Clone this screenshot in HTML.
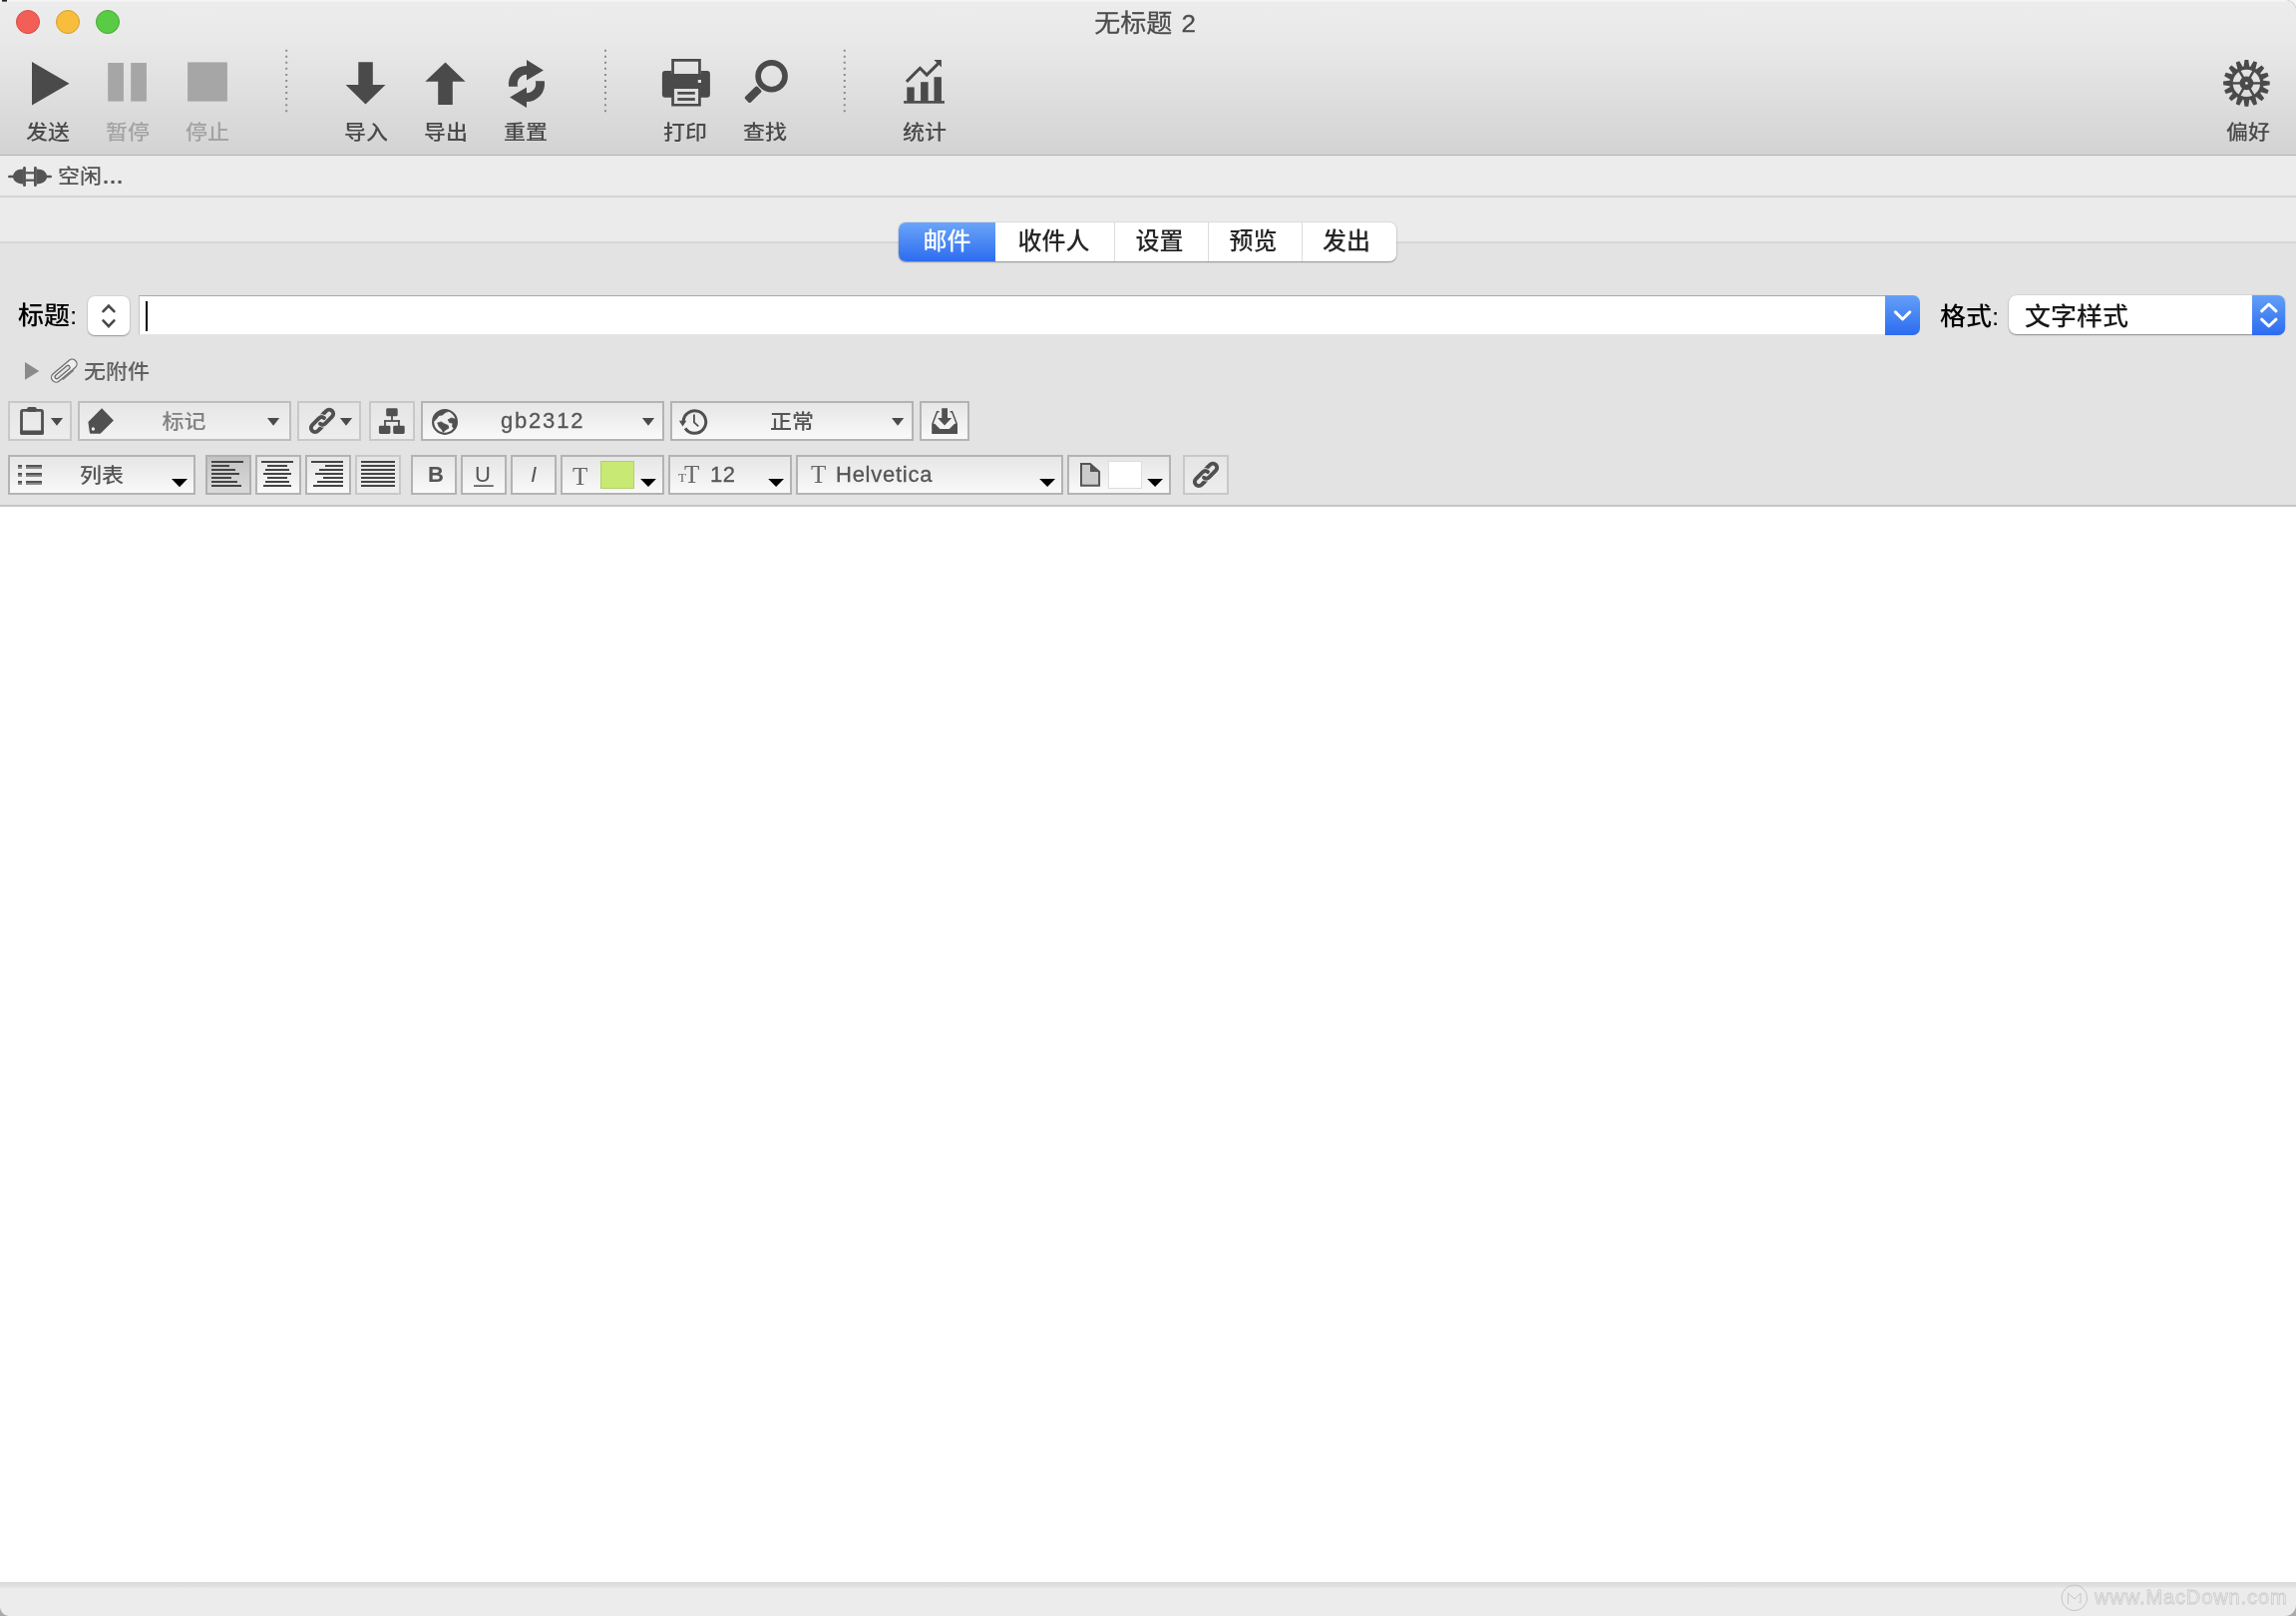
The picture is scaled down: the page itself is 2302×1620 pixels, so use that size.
<!DOCTYPE html>
<html lang="zh-CN">
<head>
<meta charset="utf-8">
<title>无标题 2</title>
<style>
html,body{margin:0;padding:0;}
body{width:2302px;height:1620px;position:relative;overflow:hidden;background:#fff;
  font-family:"Liberation Sans","Noto Sans CJK SC",sans-serif;color:#4a4a4a;font-weight:500;}
#root{position:absolute;left:0;top:0;width:2302px;height:1620px;will-change:transform;}
.abs{position:absolute;}
#titlebar{left:0;top:0;width:2302px;height:155px;background:linear-gradient(#f6f6f6 0px,#f4f4f4 1px,#ececec 2.5px,#e9e9e9 40px,#d3d3d3 155px);}
#tbline{left:0;top:155px;width:2302px;height:1px;background:#b3b3b3;}
#status{left:0;top:156px;width:2302px;height:40px;background:#ececec;}
#line1{left:0;top:196px;width:2302px;height:2px;background:#d5d5d5;z-index:1;}
#tabarea{left:0;top:197px;width:2302px;height:46px;background:#ebebeb;}
#line2{left:0;top:241.5px;width:2302px;height:2px;background:#d6d6d6;z-index:1;}
#box{left:0;top:242px;width:2302px;height:265px;background:#e3e3e3;}
#line3{left:0;top:505.5px;width:2302px;height:2px;background:#c6c6c6;z-index:1;}
#bottom{left:0;top:1586px;width:2302px;height:34px;background:linear-gradient(#dadada 0px,#e2e2e2 5px,#ececec 6px,#ececec 34px);}
.tl{position:absolute;top:10px;width:24px;height:24px;border-radius:50%;box-sizing:border-box;}
#title{left:-3px;width:2302px;top:6px;text-align:center;word-spacing:2px;font-weight:400;-webkit-text-stroke:0.3px #4c4c4c;font-size:26px;line-height:34px;color:#4c4c4c;}
.lbl{position:absolute;top:119px;font-size:22px;line-height:28px;white-space:nowrap;transform:translateX(-50%) scaleY(0.94);transform-origin:50% 86%;color:#4a4a4a;}
.cj{transform:scaleY(0.94);transform-origin:50% 86%;}
.lbl.dis{color:#a3a3a3;}
.t{position:absolute;white-space:nowrap;line-height:1;}
/* segmented */
#seg{z-index:2;left:901px;top:223px;width:499px;height:39px;border-radius:7px;background:#fff;box-shadow:0 1px 1.5px rgba(0,0,0,.32),0 0 0 1px rgba(0,0,0,.06);overflow:hidden;}
#seg div{position:absolute;top:0;height:39px;font-size:24px;line-height:37px;text-align:center;color:#262626;}
#seg .sel{background:linear-gradient(#6aa5f8,#2d6cf0);color:#fff;}
#seg .dv{width:1px;background:#dcdcdc;}
/* bezel buttons */
.bz{position:absolute;box-sizing:border-box;border:2px solid #b3b3b3;background:linear-gradient(#e6e6e6,#f9f9f9);}
.bz.lt{border-color:#c8c8c8;background:linear-gradient(#e5e5e5,#ededed);}
.bz.on{border-color:#b0b0b0;background:linear-gradient(#c3c3c3,#dadada);}
.r1{top:402px;height:40px;}
.r2{top:456px;height:40px;}
</style>
</head>
<body>
<div id="root">
<div id="titlebar" class="abs"></div>
<div id="tbline" class="abs"></div>
<div id="status" class="abs"></div>
<div id="line1" class="abs"></div>
<div id="tabarea" class="abs"></div>
<div id="line2" class="abs"></div>
<div id="box" class="abs"></div>
<div id="line3" class="abs"></div>
<div id="bottom" class="abs"></div>

<!-- traffic lights -->
<div class="tl" style="left:16px;background:#f35f57;border:1px solid #d34c43;"></div>
<div class="tl" style="left:56px;background:#f9bd3e;border:1px solid #d29f30;"></div>
<div class="tl" style="left:96px;background:#5acb45;border:1px solid #45a934;"></div>
<div id="title" class="abs cj">无标题 2</div>

<!-- toolbar labels -->
<div class="lbl" style="left:48px">发送</div>
<div class="lbl dis" style="left:128px">暂停</div>
<div class="lbl dis" style="left:208px">停止</div>
<div class="lbl" style="left:367px">导入</div>
<div class="lbl" style="left:447px">导出</div>
<div class="lbl" style="left:527px">重置</div>
<div class="lbl" style="left:687px">打印</div>
<div class="lbl" style="left:767px">查找</div>
<div class="lbl" style="left:927px">统计</div>
<div class="lbl" style="left:2254px">偏好</div>

<!-- status -->
<div class="t cj" style="left:58px;top:164px;font-size:22px;line-height:26px;color:#555;">空闲<span style="font-weight:bold;letter-spacing:0.9px;margin-left:1px;">...</span></div>

<!-- segmented control -->
<div id="seg" class="abs">
  <div class="sel" style="left:0;width:97px;">邮件</div>
  <div style="left:96px;width:119px;">收件人</div>
  <div class="dv" style="left:216px;"></div>
  <div style="left:215px;width:93px;">设置</div>
  <div class="dv" style="left:310px;"></div>
  <div style="left:309px;width:93px;">预览</div>
  <div class="dv" style="left:404px;"></div>
  <div style="left:402px;width:94px;">发出</div>
</div>

<!-- title row -->
<div class="t cj" style="left:18px;top:300px;font-size:26px;line-height:32px;color:#000;">标题:</div>
<div class="abs" style="left:88px;top:297px;width:42px;height:39px;border-radius:7px;background:#fff;box-shadow:0 1px 1.5px rgba(0,0,0,.3),0 0 0 1px rgba(0,0,0,.05);"></div>
<div class="abs" style="left:139px;top:296px;width:1752px;height:40px;box-sizing:border-box;background:#fff;border:1px solid #c4c4c4;border-top-color:#a9a9a9;border-bottom-color:#e6e6e6;border-right:none;"></div>
<div class="abs" style="left:146px;top:302px;width:2px;height:30px;background:#000;"></div>
<div class="abs" style="left:1890px;top:296px;width:35px;height:40px;border-radius:0 7px 7px 0;background:linear-gradient(#63a0f8,#2c6bf0);"></div>
<div class="t cj" style="left:1945px;top:301px;font-size:26px;line-height:32px;color:#000;">格式:</div>
<div class="abs" style="left:2014px;top:296px;width:277px;height:39px;border-radius:8px;background:#fff;box-shadow:0 1px 1.5px rgba(0,0,0,.35),0 0 0 1px rgba(0,0,0,.05);"></div>
<div class="abs" style="left:2258px;top:296px;width:33px;height:40px;border-radius:0 7px 7px 0;background:linear-gradient(#63a0f8,#2c6bf0);"></div>
<div class="t cj" style="left:2030px;top:301px;font-size:26px;line-height:32px;color:#1a1a1a;">文字样式</div>

<!-- attachments -->
<div class="t cj" style="left:84px;top:359px;font-size:22px;line-height:28px;color:#606060;">无附件</div>

<!-- row 1 buttons -->
<div class="bz lt r1" style="left:8px;width:64px;"></div>
<div class="bz r1" style="left:78px;width:214px;border-color:#bebebe;background:linear-gradient(#e6e6e6,#f2f2f2);"></div>
<div class="bz lt r1" style="left:298px;width:64px;"></div>
<div class="bz lt r1" style="left:370px;width:46px;"></div>
<div class="bz r1" style="left:422px;width:244px;"></div>
<div class="bz r1" style="left:672px;width:244px;"></div>
<div class="bz r1" style="left:922px;width:50px;"></div>
<div class="t cj" style="left:162.5px;top:409px;font-size:22px;line-height:28px;color:#808080;">标记</div>
<div class="t" style="left:502px;top:408px;font-size:22px;line-height:28px;color:#555;letter-spacing:1.8px;-webkit-text-stroke:0.3px #555;">gb2312</div>
<div class="t cj" style="left:772px;top:409px;font-size:22px;line-height:28px;color:#555;">正常</div>

<!-- row 2 buttons -->
<div class="bz r2" style="left:8px;width:188px;"></div>
<div class="bz on r2" style="left:206px;width:46px;"></div>
<div class="bz r2" style="left:256px;width:46px;"></div>
<div class="bz r2" style="left:306px;width:46px;"></div>
<div class="bz lt r2" style="left:356px;width:46px;"></div>
<div class="bz r2" style="left:412px;width:46px;"></div>
<div class="bz r2" style="left:462px;width:46px;"></div>
<div class="bz r2" style="left:512px;width:46px;"></div>
<div class="bz r2" style="left:562px;width:104px;"></div>
<div class="bz r2" style="left:670px;width:124px;"></div>
<div class="bz r2" style="left:798px;width:268px;"></div>
<div class="bz r2" style="left:1070px;width:104px;"></div>
<div class="bz lt r2" style="left:1186px;width:46px;"></div>
<div class="t cj" style="left:80px;top:463px;font-size:22px;line-height:28px;color:#555;">列表</div>
<div class="t" style="left:429px;top:462px;font-size:22px;line-height:28px;font-weight:bold;color:#555;">B</div>
<div class="t" style="left:476px;top:462px;font-size:22px;line-height:28px;color:#555;">U</div>
<div class="t" style="left:532px;top:462px;font-size:22px;line-height:28px;font-style:italic;color:#555;">I</div>
<div class="t" style="left:574px;top:462px;font-size:25px;line-height:32px;font-family:'Liberation Serif',serif;color:#666;">T</div>
<div class="t" style="left:680px;top:469px;font-size:13px;line-height:20px;font-family:'Liberation Serif',serif;color:#666;">T</div>
<div class="t" style="left:686px;top:460px;font-size:25px;line-height:32px;font-family:'Liberation Serif',serif;color:#666;">T</div>
<div class="t" style="left:712px;top:462px;font-size:22px;line-height:28px;color:#555;letter-spacing:0.4px;-webkit-text-stroke:0.3px #555;">12</div>
<div class="t" style="left:813px;top:460px;font-size:25px;line-height:32px;font-family:'Liberation Serif',serif;color:#666;">T</div>
<div class="t" style="left:838px;top:462px;font-size:22px;line-height:28px;color:#555;letter-spacing:0.75px;-webkit-text-stroke:0.3px #555;">Helvetica</div>
<div class="abs" style="left:602px;top:462px;width:34px;height:28px;box-sizing:border-box;background:#c8ea74;border:1.5px solid #b3d068;"></div>
<div class="abs" style="left:1111px;top:462px;width:34px;height:28px;box-sizing:border-box;background:#fff;border:1.5px solid #dcdcdc;"></div>

<!-- watermark -->
<div class="t" style="left:2100px;top:1589px;font-size:20px;line-height:24px;font-weight:400;letter-spacing:0.9px;color:#efefef;-webkit-text-stroke:0.8px #cacaca;">www.MacDown.com</div>

<!-- ICONS -->
<svg class="abs" style="left:0;top:0" width="2302" height="1620" viewBox="0 0 2302 1620">
<g>
<path d="M32 62 L69.5 83.8 L32 105.6Z" fill="#4a4a4a"/>
<rect x="108.2" y="63" width="15.7" height="38.6" fill="#a6a6a6"/><rect x="131.2" y="63" width="15.7" height="38.6" fill="#a6a6a6"/>
<rect x="188.1" y="62.4" width="39.8" height="39.2" fill="#a6a6a6"/>
<line x1="287.2" y1="49.7" x2="287.2" y2="112.5" stroke="#8c8c8c" stroke-width="2" stroke-dasharray="2 4.05"/>
<line x1="607" y1="49.7" x2="607" y2="112.5" stroke="#8c8c8c" stroke-width="2" stroke-dasharray="2 4.05"/>
<line x1="846.8" y1="49.7" x2="846.8" y2="112.5" stroke="#8c8c8c" stroke-width="2" stroke-dasharray="2 4.05"/>
<path d="M359.3 62.2 H373.8 V85.1 H386.5 L366.5 104.4 L346.6 85.1 H359.3Z" fill="#4a4a4a"/>
<path d="M446.5 62.5 L466.6 81.8 H453.8 V105 H439.2 V81.8 H426.3Z" fill="#4a4a4a"/>
<path d="M510.10 86.70 A18.1 18.1 0 0 1 528.0 65.90 L528.0 59.9 L544.9 70.5 L528.0 80.4 L528.0 74.75 A9.25 9.25 0 0 0 519.15 86.70Z" fill="#4a4a4a"/>
<path d="M510.10 86.70 A18.1 18.1 0 0 1 528.0 65.90 L528.0 59.9 L544.9 70.5 L528.0 80.4 L528.0 74.75 A9.25 9.25 0 0 0 519.15 86.70Z" fill="#4a4a4a" transform="rotate(180 528.0 84.0)"/>
<path fill-rule="evenodd" fill="#4a4a4a" d="M673.2 59.1 H702.8 V74 H700.1 V61.8 H675.9 V74 H673.2Z"/>
<path fill-rule="evenodd" fill="#4a4a4a" d="M666.9 71 H673.2 V74 H702.8 V71 H708.9 A3 3 0 0 1 711.9 74 V94.7 A3 3 0 0 1 708.9 97.7 H702.8 V106.6 H673.2 V97.7 H666.9 A3 3 0 0 1 663.9 94.7 V74 A3 3 0 0 1 666.9 71Z M675.9 89 V104 H700.1 V89Z M699.8 80 H703 V83.1 H699.8Z"/>
<rect x="679.3" y="92" width="17.5" height="2.7" fill="#4a4a4a"/><rect x="679.3" y="98.1" width="17.5" height="2.8" fill="#4a4a4a"/>
<circle cx="773.6" cy="76.3" r="13.45" fill="none" stroke="#4a4a4a" stroke-width="5.7"/>
<rect x="-4" y="0" width="8" height="17.5" rx="1.8" fill="#4a4a4a" transform="translate(761.3 88.6) rotate(45.5)"/>
<rect x="906.1" y="101.1" width="40.8" height="2.6" fill="#4a4a4a"/>
<rect x="909.3" y="87.4" width="7.4" height="14" fill="#4a4a4a"/><rect x="923.1" y="82.2" width="7.5" height="19" fill="#4a4a4a"/><rect x="936.5" y="77.2" width="7.4" height="24" fill="#4a4a4a"/>
<path d="M908.9 81.9 L922.4 68.3 L929.2 75.1 L941 63.4" fill="none" stroke="#4a4a4a" stroke-width="3"/>
<path d="M936.3 60.1 H943.9 V67.6Z" fill="#4a4a4a"/>
<path d="M2249.40 67.90 L2250.50 60.10 L2254.30 60.10 L2255.40 67.90Z M2255.56 67.93 L2259.56 61.15 L2263.07 62.60 L2261.10 70.23Z M2261.24 70.32 L2267.53 65.58 L2270.22 68.27 L2265.48 74.56Z M2265.57 74.70 L2273.20 72.73 L2274.65 76.24 L2267.87 80.24Z M2267.90 80.40 L2275.70 81.50 L2275.70 85.30 L2267.90 86.40Z M2267.87 86.56 L2274.65 90.56 L2273.20 94.07 L2265.57 92.10Z M2265.48 92.24 L2270.22 98.53 L2267.53 101.22 L2261.24 96.48Z M2261.10 96.57 L2263.07 104.20 L2259.56 105.65 L2255.56 98.87Z M2255.40 98.90 L2254.30 106.70 L2250.50 106.70 L2249.40 98.90Z M2249.24 98.87 L2245.24 105.65 L2241.73 104.20 L2243.70 96.57Z M2243.56 96.48 L2237.27 101.22 L2234.58 98.53 L2239.32 92.24Z M2239.23 92.10 L2231.60 94.07 L2230.15 90.56 L2236.93 86.56Z M2236.90 86.40 L2229.10 85.30 L2229.10 81.50 L2236.90 80.40Z M2236.93 80.24 L2230.15 76.24 L2231.60 72.73 L2239.23 74.70Z M2239.32 74.56 L2234.58 68.27 L2237.27 65.58 L2243.56 70.32Z M2243.70 70.23 L2241.73 62.60 L2245.24 61.15 L2249.24 67.93Z" fill="#4a4a4a"/>
<circle cx="2252.4" cy="83.4" r="15.3" fill="none" stroke="#4a4a4a" stroke-width="3.2"/>
<line x1="2237.90" y1="83.40" x2="2266.90" y2="83.40" stroke="#4a4a4a" stroke-width="2.4"/>
<line x1="2245.15" y1="70.84" x2="2259.65" y2="95.96" stroke="#4a4a4a" stroke-width="2.4"/>
<line x1="2259.65" y1="70.84" x2="2245.15" y2="95.96" stroke="#4a4a4a" stroke-width="2.4"/>
<circle cx="2252.4" cy="83.4" r="6.9" fill="#4a4a4a"/><circle cx="2252.4" cy="83.4" r="1.4" fill="#e6e6e6"/>
<g fill="#555"><rect x="8" y="175.7" width="7" height="2.6" rx="1.3"/><path d="M23.5 169.6 C16 169.6 13.1 173.2 13.1 177 C13.1 180.8 16 184.4 23.5 184.4Z"/><rect x="23.1" y="167" width="2.8" height="20" rx="1.2"/><rect x="25.5" y="172.2" width="9" height="2.2"/><rect x="25.5" y="179.6" width="9" height="2.2"/><rect x="34" y="167" width="2.8" height="20" rx="1.2"/><path d="M36.6 169.6 C44 169.6 47 173.2 47 177 C47 180.8 44 184.4 36.6 184.4Z"/><rect x="45" y="175.7" width="7" height="2.6" rx="1.3"/></g>
<path d="M103.5 312.2 L108.9 306.6 L114.4 312.2 M103.5 321.4 L108.9 327.1 L114.4 321.4" fill="none" stroke="#484848" stroke-width="2.6" stroke-linecap="round" stroke-linejoin="miter"/>
<path d="M1900.4 312.9 L1907.6 320 L1914.8 312.9" fill="none" stroke="#fff" stroke-width="3" stroke-linecap="round" stroke-linejoin="round"/>
<path d="M2267.6 311.8 L2274.8 305 L2282 311.8 M2267.6 320.2 L2274.8 327 L2282 320.2" fill="none" stroke="#fff" stroke-width="3" stroke-linecap="round" stroke-linejoin="round"/>
<path d="M25 363.1 L39.3 372 L25 380.7Z" fill="#8a8a8a"/>
<g transform="translate(64.3 371.6) rotate(-40)" stroke="#6e6e6e" stroke-width="1.3" stroke-linecap="round"><rect x="-15.2" y="-4.7" width="30.4" height="9.4" rx="4.7" fill="#eeeeee"/><rect x="-11.5" y="-1.9" width="18.5" height="3.8" rx="1.9" fill="#e3e3e3"/><path d="M-6.4 5.9 L7 5.9" fill="none" stroke-width="1.1"/></g>
<rect x="21.5" y="411.4" width="21" height="23" rx="1.5" fill="none" stroke="#505050" stroke-width="2.8"/><rect x="20.1" y="431.6" width="23.8" height="4.2" rx="1.2" fill="#505050"/><rect x="27.2" y="407.9" width="9.4" height="5" rx="1.6" fill="#505050"/>
<path d="M50.9 419 h12.2 l-6.1 7.7Z" fill="#4a4a4a"/>
<path fill-rule="evenodd" fill="#505050" d="M102.1 409.3 L113.9 421.5 L100.6 434.7 H91.4 A1.6 1.6 0 0 1 89.8 433.2 L88.4 422.9Z M91.7 430 a1.7 1.7 0 1 0 3.4 0 a1.7 1.7 0 1 0 -3.4 0Z"/>
<path d="M268 419 h12.2 l-6.1 7.7Z" fill="#4a4a4a"/>
<g transform="translate(323.0 421.9) rotate(-45)"><path d="M7.2 -4.1 L10 -4.1 A4.1 4.1 0 0 1 10 4.1 L0.6 4.1 Q-3.2 4.1 -3.4 0.6" fill="none" stroke="#505050" stroke-width="3.9" stroke-linecap="round"/><path d="M3.3 -6.05 L7.6 -6.05 L7.6 -2.15 L7.2 -2.15Z" fill="#505050"/><!--#505050--><g transform="rotate(180)"><path d="M7.2 -4.1 L10 -4.1 A4.1 4.1 0 0 1 10 4.1 L0.6 4.1 Q-3.2 4.1 -3.4 0.6" fill="none" stroke="#505050" stroke-width="3.9" stroke-linecap="round"/><path d="M3.3 -6.05 L7.6 -6.05 L7.6 -2.15 L7.2 -2.15Z" fill="#505050"/><!--#505050--></g></g>
<path d="M340.9 419 h12.2 l-6.1 7.7Z" fill="#4a4a4a"/>
<g fill="#505050"><rect x="387.2" y="409.3" width="11.5" height="8" rx="1.4"/><rect x="379.9" y="426.7" width="11.5" height="8.2" rx="1.4"/><rect x="394.2" y="426.7" width="11.5" height="8.2" rx="1.4"/><rect x="392.1" y="417" width="1.8" height="5"/><rect x="385.1" y="421.1" width="15.7" height="1.8"/><rect x="385.1" y="421.1" width="1.8" height="6"/><rect x="399" y="421.1" width="1.8" height="6"/></g>
<circle cx="446" cy="422.9" r="11.9" fill="none" stroke="#505050" stroke-width="2.2"/>
<path fill="#505050" d="M434.9 418 L440.1 412.8 L446.4 410.7 L449.9 412.1 L446.1 413.8 L443.6 415.9 L440.1 416.6 L437.4 420.1 L435.3 422.2Z M438.7 423.9 L442.2 422.9 L445.7 425 L449.2 426.4 L449.9 429.1 L446.4 431.2 L444.3 433.4 L442.9 430.5 L440.1 427.8Z M449.2 420.8 L452.7 419 L457.2 420.4 L458.3 424.3 L455.5 429.8 L453.4 427.8 L454.1 424.3 L450.6 423.6Z" stroke="#505050" stroke-width="0.8" stroke-linejoin="round"/>
<path d="M643.9 419 h12.2 l-6.1 7.7Z" fill="#4a4a4a"/>
<path d="M685.11 422.61 A11.3 11.3 0 1 1 687.03 429.32" fill="none" stroke="#505050" stroke-width="3"/>
<path d="M680.9 421.8 H688.3 L684.5 427.4Z" fill="#505050"/>
<path d="M695.9 415.4 V423.3 L700.3 427.3" fill="none" stroke="#505050" stroke-width="1.8"/>
<path d="M894 419 h12.2 l-6.1 7.7Z" fill="#4a4a4a"/>
<path fill="#505050" d="M934.2 424.8 H937.2 L942.4 430 H951.8 L957 424.8 H960 V434.9 H934.2Z"/>
<path fill="none" stroke="#505050" stroke-width="1.5" d="M934.9 425 L939.6 412.8 H941.6 M959.3 425 L954.6 412.8 H952.6"/>
<path fill="#505050" d="M944.2 409.3 H950 V419 H954.1 L947.1 426.4 L940.1 419 H944.2Z"/>
<rect x="18" y="466" width="4" height="2" fill="#555"/><rect x="18" y="468" width="4" height="2" fill="#8a8a8a"/>
<rect x="26" y="466" width="16" height="2" fill="#555"/><rect x="26" y="468" width="16" height="2" fill="#8a8a8a"/>
<rect x="18" y="474" width="4" height="2" fill="#555"/><rect x="18" y="476" width="4" height="2" fill="#8a8a8a"/>
<rect x="26" y="474" width="16" height="2" fill="#555"/><rect x="26" y="476" width="16" height="2" fill="#8a8a8a"/>
<rect x="18" y="482" width="4" height="2" fill="#555"/><rect x="18" y="484" width="4" height="2" fill="#8a8a8a"/>
<rect x="26" y="482" width="16" height="2" fill="#555"/><rect x="26" y="484" width="16" height="2" fill="#8a8a8a"/>
<path d="M172 480 h16 l-8.0 8.2Z" fill="#000"/>
<rect x="212" y="462" width="32" height="2" fill="#444"/>
<rect x="212" y="466" width="18" height="2" fill="#444"/>
<rect x="212" y="470" width="24" height="2" fill="#444"/>
<rect x="212" y="474" width="28" height="2" fill="#444"/>
<rect x="212" y="478" width="20" height="2" fill="#444"/>
<rect x="212" y="482" width="26" height="2" fill="#444"/>
<rect x="212" y="486" width="30" height="2" fill="#444"/>
<rect x="262.0" y="462" width="32" height="2" fill="#444"/>
<rect x="268.0" y="466" width="20" height="2" fill="#444"/>
<rect x="266.0" y="470" width="24" height="2" fill="#444"/>
<rect x="264.0" y="474" width="28" height="2" fill="#444"/>
<rect x="268.0" y="478" width="20" height="2" fill="#444"/>
<rect x="266.0" y="482" width="24" height="2" fill="#444"/>
<rect x="264.0" y="486" width="28" height="2" fill="#444"/>
<rect x="312" y="462" width="32" height="2" fill="#444"/>
<rect x="326" y="466" width="18" height="2" fill="#444"/>
<rect x="320" y="470" width="24" height="2" fill="#444"/>
<rect x="316" y="474" width="28" height="2" fill="#444"/>
<rect x="324" y="478" width="20" height="2" fill="#444"/>
<rect x="318" y="482" width="26" height="2" fill="#444"/>
<rect x="314" y="486" width="30" height="2" fill="#444"/>
<rect x="362" y="462" width="34" height="2" fill="#444"/>
<rect x="362" y="466" width="34" height="2" fill="#444"/>
<rect x="362" y="470" width="34" height="2" fill="#444"/>
<rect x="362" y="474" width="34" height="2" fill="#444"/>
<rect x="362" y="478" width="34" height="2" fill="#444"/>
<rect x="362" y="482" width="34" height="2" fill="#444"/>
<rect x="362" y="486" width="34" height="2" fill="#444"/>
<rect x="475" y="486.3" width="19.8" height="1.6" fill="#555"/>
<path d="M642.1 480 h15.8 l-7.9 8.1Z" fill="#000"/>
<path d="M770.2 480 h15.8 l-7.9 8.1Z" fill="#000"/>
<path d="M1042.2 480 h15.8 l-7.9 8.1Z" fill="#000"/>
<path d="M1150.2 480 h15.8 l-7.9 8.1Z" fill="#000"/>
<path d="M1084 465 H1093 L1102.1 473 V486.8 H1084Z" fill="#cbcbcb" stroke="#555" stroke-width="2"/><path d="M1093 464.5 L1102.6 473 H1093Z" fill="#555"/>
<g transform="translate(1209 475.9) rotate(-45)"><path d="M7.2 -4.1 L10 -4.1 A4.1 4.1 0 0 1 10 4.1 L0.6 4.1 Q-3.2 4.1 -3.4 0.6" fill="none" stroke="#505050" stroke-width="3.9" stroke-linecap="round"/><path d="M3.3 -6.05 L7.6 -6.05 L7.6 -2.15 L7.2 -2.15Z" fill="#505050"/><!--#505050--><g transform="rotate(180)"><path d="M7.2 -4.1 L10 -4.1 A4.1 4.1 0 0 1 10 4.1 L0.6 4.1 Q-3.2 4.1 -3.4 0.6" fill="none" stroke="#505050" stroke-width="3.9" stroke-linecap="round"/><path d="M3.3 -6.05 L7.6 -6.05 L7.6 -2.15 L7.2 -2.15Z" fill="#505050"/><!--#505050--></g></g>
<circle cx="2079.8" cy="1601.8" r="12.8" fill="none" stroke="#c6c6c6" stroke-width="1"/><path d="M2073.5 1608 V1597 L2080 1603 L2086 1597 V1606.5 H2084.5" fill="none" stroke="#c6c6c6" stroke-width="1"/>
<path d="M2302 1620 V1609 A11 11 0 0 1 2291 1620Z" fill="#a9a9a9"/><path d="M0 1620 V1611 A9 9 0 0 0 9 1620Z" fill="#a9a9a9"/><path d="M0 0 H6 A6 6 0 0 0 0 6Z" fill="#f2f2f2"/><path d="M2302 0 H2294 A8 8 0 0 1 2302 8Z" fill="#f4f4f4"/><path d="M2293.5 0.5 A8.5 8.5 0 0 1 2301.5 8.5" fill="none" stroke="#d2d2d2" stroke-width="1"/><rect x="2" y="0" width="5" height="1.6" fill="#222"/>
</g>
</svg>
</div>
</body>
</html>
